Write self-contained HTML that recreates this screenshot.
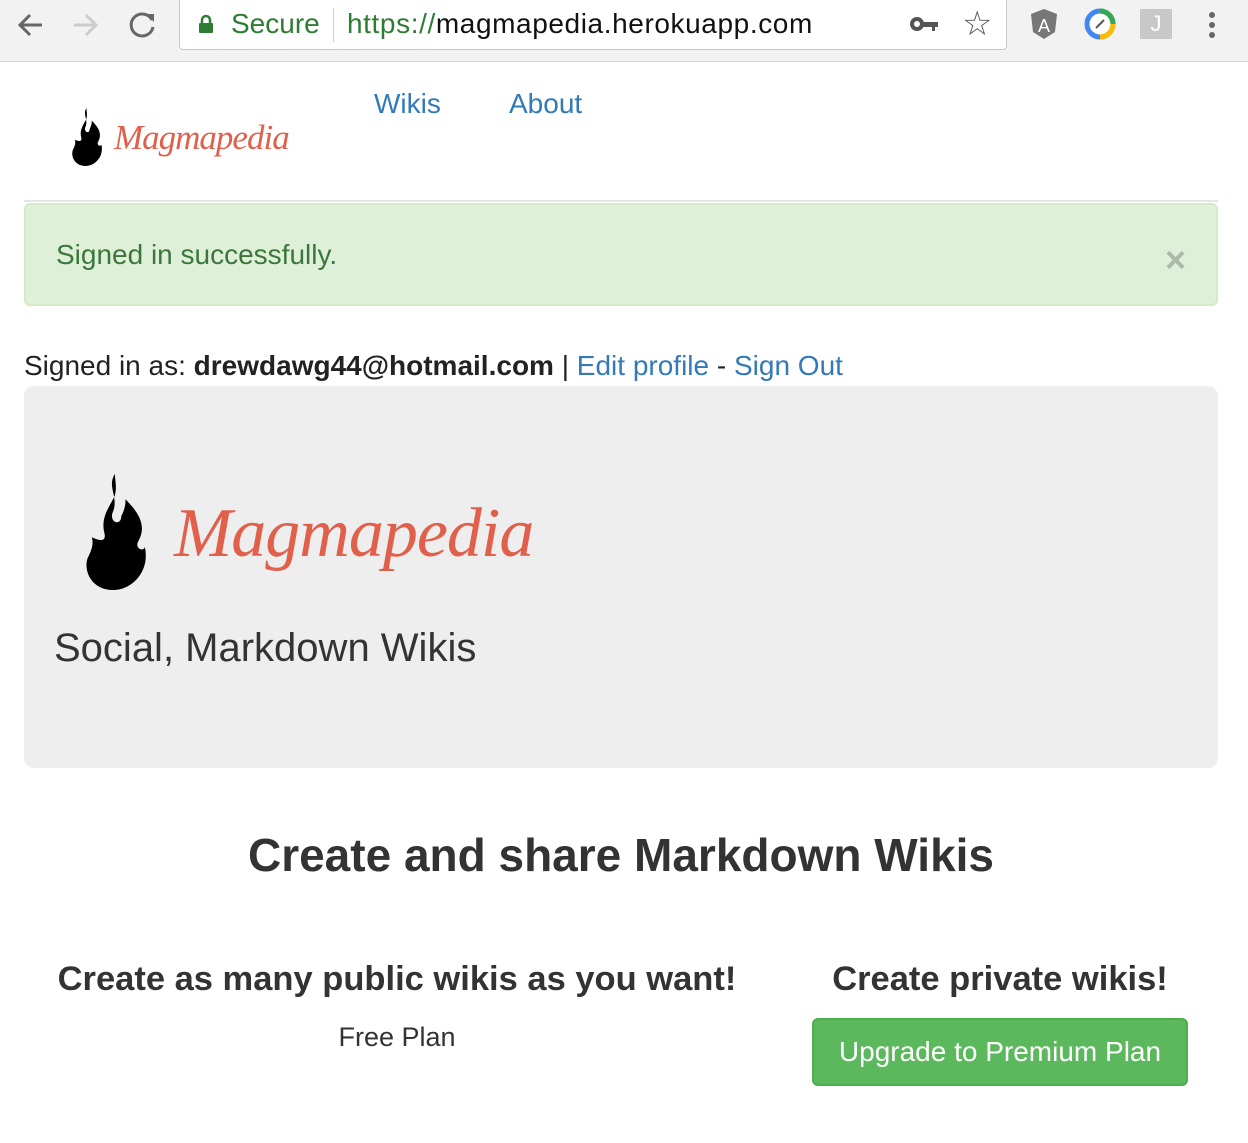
<!DOCTYPE html>
<html><head><meta charset="utf-8"><style>
*{box-sizing:border-box;margin:0;padding:0}
body{width:1248px;height:1143px;overflow:hidden;background:#fff;font-family:"Liberation Sans",sans-serif;color:#333}
.chrome{height:62px;background:#f2f2f2;border-bottom:1px solid #d0d0d0;position:relative}
.omni{position:absolute;left:179px;top:0;width:828px;height:50px;background:#fff;border:1px solid #c8c8c8;border-top:none;border-radius:0 0 4px 4px}
.a{position:absolute;top:8px;font-size:28px}
.flame{position:absolute}
.logo{position:absolute;font-family:"Liberation Serif",serif;font-style:italic;color:#e0604c;letter-spacing:-1px}
a{color:#337ab7;text-decoration:none}
</style></head><body>
<div class="chrome">
<svg style="position:absolute;left:16px;top:12px" width="30" height="26"><path d="M26 13H4M14 3L4 13l10 10" stroke="#666" stroke-width="3" fill="none"/></svg>
<svg style="position:absolute;left:72px;top:12px" width="30" height="26"><path d="M2 13h22M14 3l10 10-10 10" stroke="#ccc" stroke-width="3" fill="none"/></svg>
<svg style="position:absolute;left:128px;top:10px" width="30" height="30"><path d="M24 10A11 11 0 1 0 25 17" stroke="#666" stroke-width="3" fill="none"/><path d="M18 4h8v8z" fill="#666"/></svg>
<div class="omni">
<svg style="position:absolute;left:18px;top:14px" width="16" height="20"><path d="M4 9V6a4 4 0 0 1 8 0v3" stroke="#2e7d32" stroke-width="2.5" fill="none"/><rect x="1" y="9" width="14" height="10" rx="1" fill="#2e7d32"/></svg>
<span class="a" style="left:51px;color:#2e7d32">Secure</span>
<div style="position:absolute;left:153px;top:8px;width:1px;height:34px;background:#ccc"></div>
<span class="a" style="left:167px;letter-spacing:0.6px"><span style="color:#2e7d32">https://</span><span style="color:#111">magmapedia.herokuapp.com</span></span>
<svg style="position:absolute;left:730px;top:14px" width="30" height="20"><circle cx="7" cy="10" r="5" stroke="#555" stroke-width="4" fill="none"/><path d="M12 8h16v5h-3v4h-3v-4h-10z" fill="#555"/></svg>
<div style="position:absolute;left:782px;top:4px;font-size:34px;color:#555">☆</div>
</div>
<svg style="position:absolute;left:1030px;top:8px" width="28" height="32"><path d="M14 1L27 6 25 24 14 31 3 24 1 6z" fill="#777"/><text x="14" y="24" font-size="18" fill="#fff" text-anchor="middle" font-family="Liberation Sans">A</text></svg>
<svg style="position:absolute;left:1084px;top:8px" width="32" height="32"><circle cx="16" cy="16" r="13" stroke="#4285f4" stroke-width="5" fill="#fff"/><path d="M16 3a13 13 0 0 1 13 13" stroke="#34a853" stroke-width="5" fill="none"/><path d="M29 16a13 13 0 0 1-13 13" stroke="#fbbc05" stroke-width="5" fill="none"/><path d="M12 20l8-8" stroke="#555" stroke-width="2"/></svg>
<div style="position:absolute;left:1140px;top:9px;width:32px;height:30px;background:#c8c8c8;color:#fff;font-size:22px;text-align:center;line-height:30px">J</div>
<svg style="position:absolute;left:1206px;top:10px" width="12" height="30"><circle cx="6" cy="5" r="3" fill="#666"/><circle cx="6" cy="15" r="3" fill="#666"/><circle cx="6" cy="25" r="3" fill="#666"/></svg>
</div>

<svg class="flame" style="left:68px;top:108px" width="38" height="58" viewBox="0 0 62 110"><path d="M30 0C22 12 34 22 28 36 24 46 36 50 36 40 40 32 40 28 40 24 54 38 60 50 52 64 48 72 60 74 58 68 64 90 48 110 28 110 8 110 0 92 4 80 8 72 10 66 8 60 16 64 22 64 20 56 16 40 26 30 30 20 32 12 30 6 30 0Z" fill="#000"/></svg>
<div class="logo" style="left:114px;top:118px;font-size:35px">Magmapedia</div>
<a style="position:absolute;left:374px;top:88px;font-size:28px">Wikis</a>
<a style="position:absolute;left:509px;top:88px;font-size:28px">About</a>
<div style="position:absolute;left:24px;top:200px;width:1194px;height:2px;background:#e5e5e5"></div>

<div style="position:absolute;left:24px;top:203px;width:1194px;height:103px;background:#dff0d8;border:2px solid #d6e9c6;border-radius:6px;color:#3c763d;font-size:28px;padding:34px 30px">Signed in successfully.<span style="position:absolute;right:30px;top:34px;color:#aab8a8;font-size:36px;font-weight:bold">×</span></div>

<div style="position:absolute;left:24px;top:350px;font-size:28px;color:#222">Signed in as: <b>drewdawg44@hotmail.com</b> | <a>Edit profile</a> - <a>Sign Out</a></div>

<div style="position:absolute;left:24px;top:386px;width:1194px;height:382px;background:#eee;border-radius:10px">
<svg class="flame" style="left:58px;top:88px" width="68" height="116" viewBox="0 0 62 110"><path d="M30 0C22 12 34 22 28 36 24 46 36 50 36 40 40 32 40 28 40 24 54 38 60 50 52 64 48 72 60 74 58 68 64 90 48 110 28 110 8 110 0 92 4 80 8 72 10 66 8 60 16 64 22 64 20 56 16 40 26 30 30 20 32 12 30 6 30 0Z" fill="#000"/></svg>
<div class="logo" style="left:150px;top:108px;font-size:70px">Magmapedia</div>
<div style="position:absolute;left:30px;top:240px;font-size:40px;font-weight:300;color:#333">Social, Markdown Wikis</div>
</div>

<div style="position:absolute;left:0;width:1242px;top:828px;text-align:center;font-size:46px;font-weight:bold;color:#333">Create and share Markdown Wikis</div>
<div style="position:absolute;left:24px;width:746px;top:960px;text-align:center;font-size:34.5px;font-weight:bold">Create as many public wikis as you want!</div>
<div style="position:absolute;left:24px;width:746px;top:1022px;text-align:center;font-size:27px">Free Plan</div>
<div style="position:absolute;left:800px;width:400px;top:960px;text-align:center;font-size:34.5px;font-weight:bold">Create private wikis!</div>
<div style="position:absolute;left:812px;top:1018px;width:376px;height:68px;background:#5cb85c;border:2px solid #4cae4c;border-radius:6px;color:#fff;font-size:28px;text-align:center;line-height:64px">Upgrade to Premium Plan</div>
</body></html>
